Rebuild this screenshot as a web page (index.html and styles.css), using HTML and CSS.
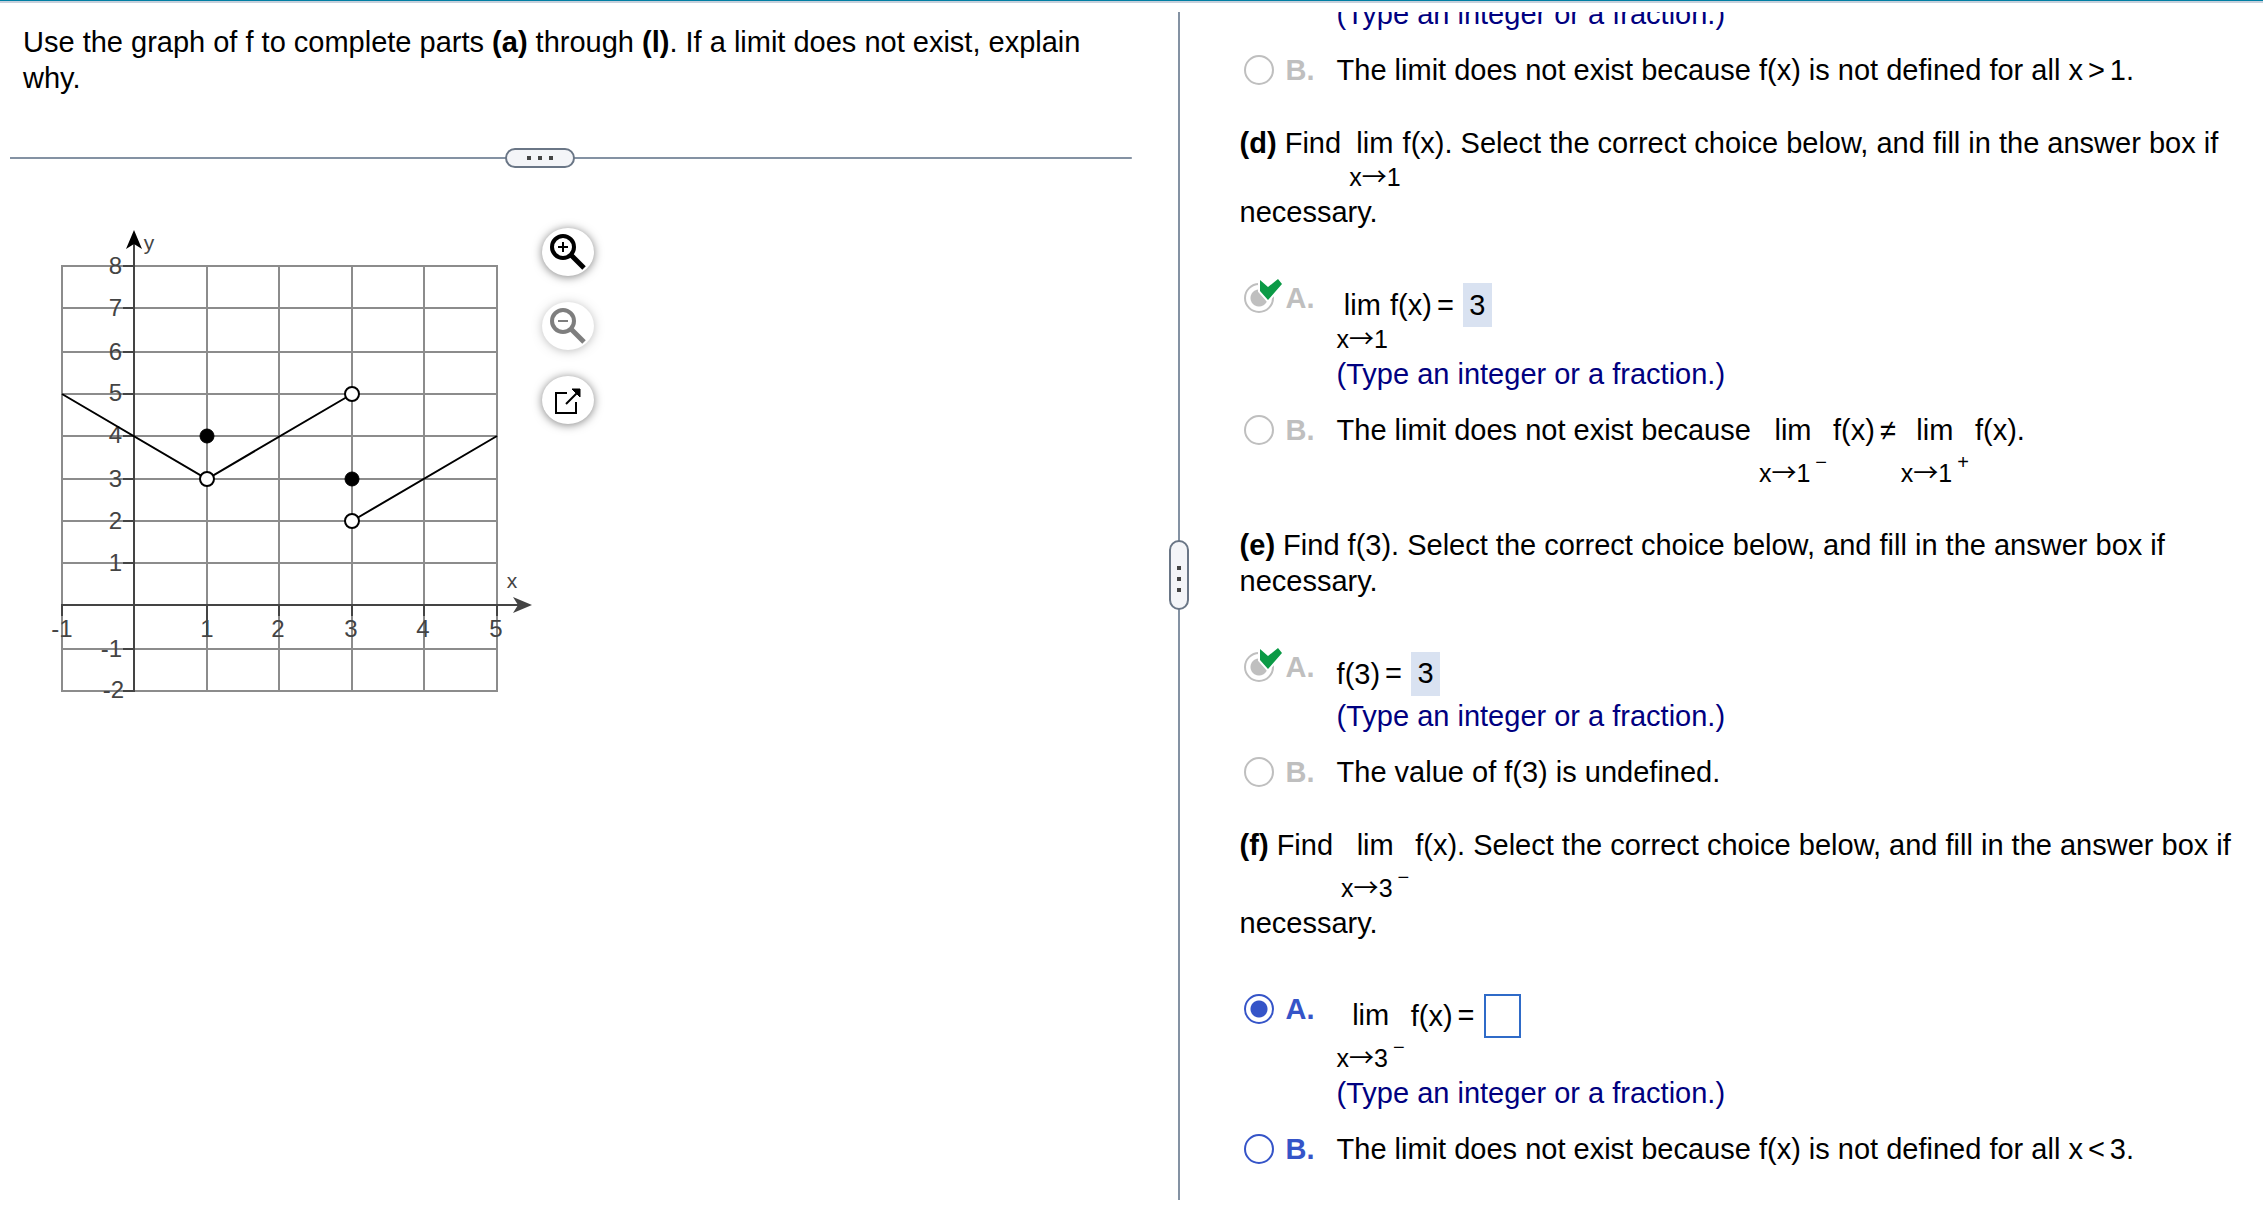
FILE: index.html
```html
<!DOCTYPE html>
<html lang="en">
<head>
	<meta charset="UTF-8">
	<title>Limits from a graph</title>
	<link rel="stylesheet" href="styles.css">
</head>
<body>
	<main class="player">
		<section class="problem">
			<p class="problem-text">Use the graph of f to complete parts <b>(a)</b> through <b>(l)</b>. If a limit does not exist, explain why.</p>

			<div class="split split-row">
				<button type="button" class="handle" aria-label="Resize question"><i></i><i></i><i></i></button>
			</div>

			<div class="figure">
				<svg class="graph" width="502" height="480" viewBox="38 220 502 480" role="img" aria-label="Graph of f">
					<g class="grid">
						<path d="M62 266V691M207 266V691M279 266V691M352 266V691M424 266V691M497 266V691"/>
						<path d="M61 266H498M61 308H498M61 352H498M61 394H498M61 436H498M61 479H498M61 521H498M61 563H498M61 649H498M61 691H498"/>
					</g>
					<g class="axis">
						<path d="M134 692V240M61 605H522"/>
						<path d="M123 266H134M123 308H134M123 352H134M123 394H134M123 436H134M123 479H134M123 521H134M123 563H134M123 649H134M123 691H134"/>
						<path d="M62 605V616M207 605V636M279 605V616M352 605V616M424 605V616M497 605V616"/>
					</g>
					<path d="M134 230L142 249L134 244L126 249Z"/>
					<path class="arrow-x" d="M532 605L513 613L518 605L513 597Z"/>
					<g class="tick-y">
						<text x="122" y="274">8</text>
						<text x="122" y="316">7</text>
						<text x="122" y="360">6</text>
						<text x="122" y="401">5</text>
						<text x="122" y="443">4</text>
						<text x="122" y="487">3</text>
						<text x="122" y="529">2</text>
						<text x="122" y="571">1</text>
						<text x="122" y="657">-1</text>
						<text x="124" y="698">-2</text>
					</g>
					<g class="tick-x">
						<text x="62" y="637">-1</text>
						<text x="207" y="637">1</text>
						<text x="278" y="637">2</text>
						<text x="351" y="637">3</text>
						<text x="423" y="637">4</text>
						<text x="496" y="637">5</text>
						<text class="name" x="512" y="588">x</text>
						<text class="name" x="149" y="250">y</text>
					</g>
					<g class="curve">
						<path d="M62 394L207 479L352 394M352 521L497 436"/>
						<circle class="open" cx="207" cy="479" r="7"/>
						<circle class="open" cx="352" cy="394" r="7"/>
						<circle class="open" cx="352" cy="521" r="7"/>
						<circle class="closed" cx="207" cy="436" r="7"/>
						<circle class="closed" cx="352" cy="479" r="7"/>
					</g>
				</svg>
				<div class="tools">
					<button type="button" class="tool" aria-label="Zoom in">
						<svg width="36" height="36" viewBox="0 0 36 36">
							<circle cx="13" cy="13" r="11" stroke-width="4"/>
							<path d="M8 13H18M13 8V18" stroke-width="2"/>
							<path d="M21 21L34 34" stroke-width="5"/>
						</svg>
					</button>
					<button type="button" class="tool" aria-label="Zoom out" disabled>
						<svg width="36" height="36" viewBox="0 0 36 36">
							<circle cx="13" cy="13" r="11" stroke-width="4"/>
							<path d="M8 13H18" stroke-width="2"/>
							<path d="M21 21L34 34" stroke-width="5"/>
						</svg>
					</button>
					<button type="button" class="tool" aria-label="Open in new window">
						<svg width="36" height="36" viewBox="0 0 36 36">
							<path d="M17 11H6V31H26V20" stroke-width="2"/>
							<path d="M16 22L28 10" stroke-width="2"/>
							<path class="tip" d="M22 7H30V15Z"/>
						</svg>
					</button>
				</div>
			</div>
		</section>

		<div class="split split-col">
			<button type="button" class="handle" aria-label="Resize panes"><i></i><i></i><i></i></button>
		</div>

		<section class="parts">
			<div class="parts-inner">
				<div class="choices locked">
					<p class="hint indent">(Type an integer or a fraction.)</p>
					<div class="choice">
						<input type="radio" name="c" id="c-b" disabled>
						<label for="c-b">B.</label>
						<div class="body">The limit does not exist because f(x) is not defined for all x<span class="op">&gt;</span>1.</div>
					</div>
				</div>

				<p class="question"><b>(d)</b> Find <span class="lim"><span>lim</span><span class="to">x<span class="arrow">→</span>1</span></span>f(x). Select the correct choice below, and fill in the answer box if necessary.</p>
				<div class="choices locked">
					<div class="choice">
						<span class="mark">
							<input type="radio" name="d" id="d-a" checked disabled>
							<svg class="check" width="22" height="22" viewBox="0 0 22 22"><path d="M0 1L8 8L18 0L22 5L8 21L0 12Z"/></svg>
						</span>
						<label for="d-a">A.</label>
						<div class="body">
							<span class="lim"><span>lim</span><span class="to">x<span class="arrow">→</span>1</span></span>f(x)<span class="op">=</span><input class="answer" type="text" value="3" aria-label="Limit as x approaches 1" readonly>
							<p class="hint">(Type an integer or a fraction.)</p>
						</div>
					</div>
					<div class="choice">
						<input type="radio" name="d" id="d-b" disabled>
						<label for="d-b">B.</label>
						<div class="body">The limit does not exist because <span class="lim side"><span>lim</span><span class="to">x<span class="arrow">→</span>1<sup>−</sup></span></span>f(x)<span class="op">≠</span><span class="lim side"><span>lim</span><span class="to">x<span class="arrow">→</span>1<sup>+</sup></span></span>f(x).</div>
					</div>
				</div>

				<p class="question"><b>(e)</b> Find f(3). Select the correct choice below, and fill in the answer box if necessary.</p>
				<div class="choices locked">
					<div class="choice">
						<span class="mark">
							<input type="radio" name="e" id="e-a" checked disabled>
							<svg class="check" width="22" height="22" viewBox="0 0 22 22"><path d="M0 1L8 8L18 0L22 5L8 21L0 12Z"/></svg>
						</span>
						<label for="e-a">A.</label>
						<div class="body">
							f(3)<span class="op">=</span><input class="answer" type="text" value="3" aria-label="Value of f(3)" readonly>
							<p class="hint">(Type an integer or a fraction.)</p>
						</div>
					</div>
					<div class="choice">
						<input type="radio" name="e" id="e-b" disabled>
						<label for="e-b">B.</label>
						<div class="body">The value of f(3) is undefined.</div>
					</div>
				</div>

				<p class="question"><b>(f)</b> Find <span class="lim side"><span>lim</span><span class="to">x<span class="arrow">→</span>3<sup>−</sup></span></span>f(x). Select the correct choice below, and fill in the answer box if necessary.</p>
				<div class="choices">
					<div class="choice">
						<input type="radio" name="f" id="f-a" checked>
						<label for="f-a">A.</label>
						<div class="body">
							<span class="lim side"><span>lim</span><span class="to">x<span class="arrow">→</span>3<sup>−</sup></span></span>f(x)<span class="op">=</span><input class="answer blank" type="text" aria-label="Limit as x approaches 3 from the left">
							<p class="hint">(Type an integer or a fraction.)</p>
						</div>
					</div>
					<div class="choice">
						<input type="radio" name="f" id="f-b">
						<label for="f-b">B.</label>
						<div class="body">The limit does not exist because f(x) is not defined for all x<span class="op">&lt;</span>3.</div>
					</div>
				</div>
			</div>
		</section>
	</main>
</body>
</html>
```
FILE: styles.css
```css
*{
	box-sizing: border-box;
}
html,body,p{
	margin: 0;
	padding: 0;
}
body{
	height: 100vh;
	overflow: hidden;
	border-top: 1px solid #007fa3;
	background-color: #fff;
	color: #000;
	font: 29px/36px "Liberation Sans", Arial, sans-serif;
}
.player{
	display: grid;
	grid-template-columns: 52.1fr 20px 47.9fr;
	height: 100%;
	padding: 9px 0 22px;
	border-top: 2px solid #c7d0dc;
}

/* left pane */
.problem{
	padding: 12px 37px 0 10px;
}
.problem-text{
	padding: 0 40px 0 13px;
}
.split{
	display: flex;
	align-items: center;
	justify-content: center;
}
.split-row{
	height: 20px;
	margin-top: 52px;
	padding-right: 62px;
	background: linear-gradient(#8492a3,#8492a3) center / 100% 2px no-repeat;
}
.split-col{
	padding-bottom: 62px;
	background: linear-gradient(#8492a3,#8492a3) center / 2px 100% no-repeat;
}
.handle{
	display: flex;
	align-items: center;
	justify-content: center;
	gap: 7px;
	padding: 0;
	border: 2px solid #6a7686;
	border-radius: 10px;
	background-color: #f4f5f8;
}
.handle i{
	width: 4px;
	height: 4px;
	background-color: #444;
}
.split-row .handle{
	width: 70px;
	height: 20px;
}
.split-col .handle{
	flex-direction: column;
	width: 20px;
	height: 70px;
	padding-top: 8px;
}
.figure{
	display: flex;
	margin-top: 52px;
	padding-left: 28px;
}
.graph{
	overflow: visible;
}
.graph text{
	font-size: 24px;
	fill: #444;
}
.graph .name{
	font-size: 21px;
}
.grid path{
	stroke: #8c8c8c;
	stroke-width: 2;
}
.axis path{
	fill: none;
	stroke: #444;
	stroke-width: 2;
}
.arrow-x{
	fill: #444;
}
.tick-y{
	text-anchor: end;
}
.tick-x{
	text-anchor: middle;
}
.curve path{
	fill: none;
	stroke: #000;
	stroke-width: 2;
}
.open{
	fill: #fff;
	stroke: #000;
	stroke-width: 2;
}
.closed{
	stroke: #000;
}
.tools{
	display: flex;
	flex-direction: column;
	gap: 26px;
	padding: 8px 0 0 2px;
}
.tool{
	display: flex;
	align-items: center;
	justify-content: center;
	width: 52px;
	height: 48px;
	padding: 0;
	border: 0;
	border-radius: 50%;
	background-color: #fff;
	box-shadow: 0 1px 10px rgba(0,0,0,.5);
}
.tool svg{
	fill: none;
	stroke: #000;
}
.tool .tip{
	fill: #000;
}
.tool:disabled{
	opacity: .5;
}

/* right pane, scrolled part of the way down */
.parts{
	overflow: hidden;
	padding: 0 20px 0 51px;
}
.parts-inner{
	margin-top: -16px;
}
.question{
	margin: 37px 0 50px;
}
.choices{
	display: flex;
	flex-direction: column;
	gap: 20px;
	color: #3554c8;
}
.locked{
	color: #bfbfbf;
}
.choice{
	display: grid;
	grid-template-columns: 46px 51px 1fr;
	align-items: start;
}
.choice label{
	font-weight: bold;
}
.body{
	color: #000;
}
.hint{
	color: #000080;
}
.indent{
	padding-left: 97px;
}
.mark{
	position: relative;
	display: flex;
}
.check{
	position: absolute;
	top: -1px;
	left: 20px;
	overflow: visible;
	fill: #0b9a46;
	stroke: #fff;
	stroke-width: 4;
	paint-order: stroke;
}
input[type="radio"]{
	appearance: none;
	width: 30px;
	height: 30px;
	margin: 3px 3px 0 4px;
	border: 2px solid currentColor;
	border-radius: 50%;
	color: inherit;
}
input[type="radio"]:checked{
	background: radial-gradient(circle,currentColor 8px,transparent 9px);
}
.lim{
	display: inline-grid;
	justify-items: center;
	margin-right: 2px;
}
.side{
	margin-right: 6px;
}
.to{
	font-size: 25px;
	line-height: 33px;
}
.side .to{
	padding-top: 9px;
}
.arrow{
	font-family: "Noto Sans CJK JP", sans-serif;
	line-height: 0;
}
.to sup{
	margin-left: 5px;
	font-size: 20px;
	line-height: 0;
	vertical-align: 13px;
}
.op{
	margin: 0 5px;
}
.answer{
	width: 29px;
	height: 44px;
	margin: 3px 0 2px 4px;
	padding: 0;
	border: 0;
	background-color: #d9e2f1;
	color: #000;
	font: inherit;
	text-align: center;
}
.blank{
	width: 37px;
	border: 2px solid #2f6bc8;
	background-color: #fff;
}
```
